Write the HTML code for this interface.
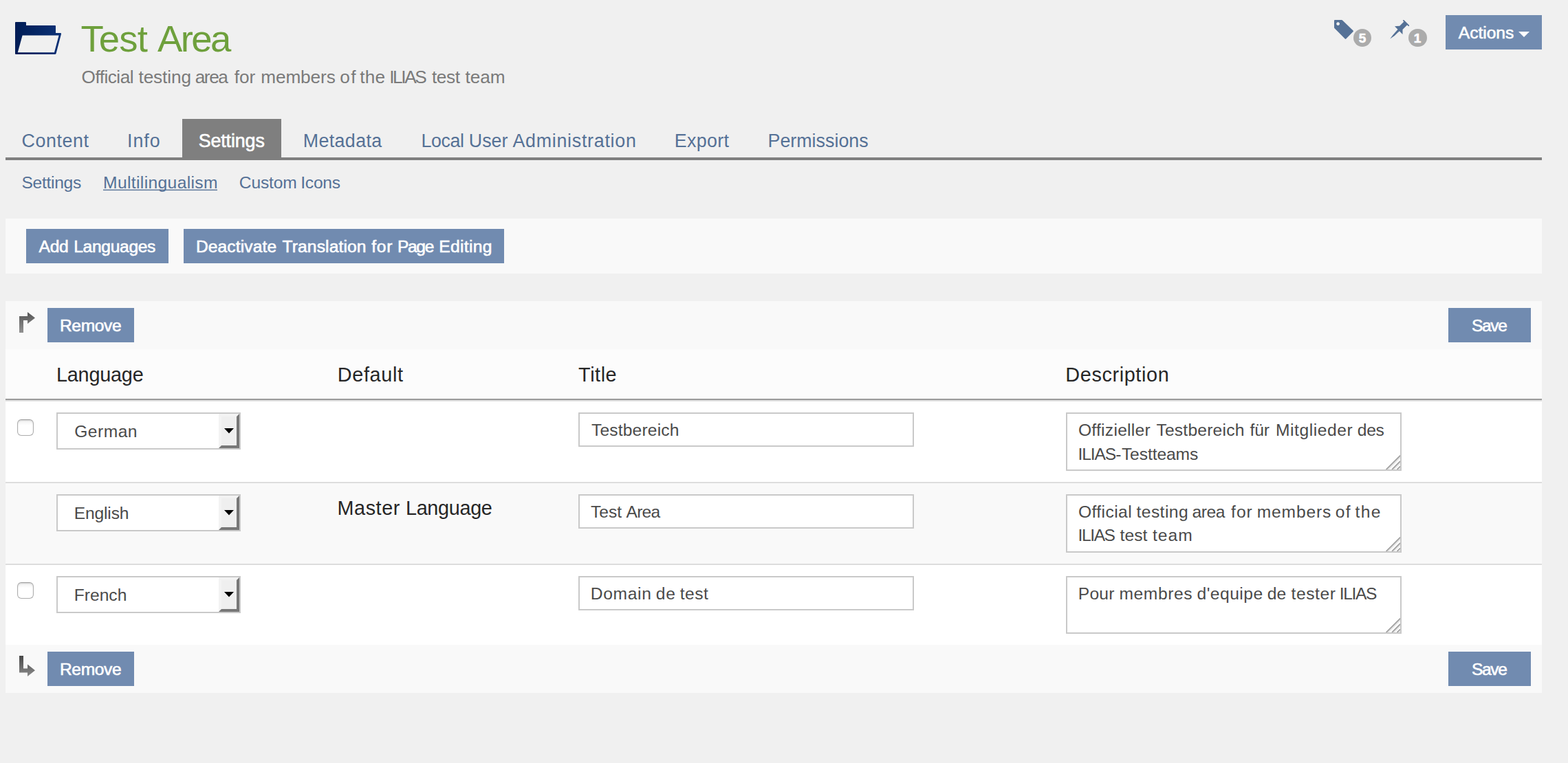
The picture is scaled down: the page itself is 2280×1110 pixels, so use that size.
<!DOCTYPE html>
<html lang="en">
<head>
<meta charset="utf-8">
<title>Test Area - Multilingualism</title>
<style>
html,body{margin:0;padding:0;}
body{width:2280px;height:1110px;background:#f0f0f0;position:relative;overflow:hidden;font-family:"Liberation Sans",sans-serif;}
h1,p{margin:0;padding:0;font-weight:normal;}
.b{position:absolute;display:block;}
.t{position:absolute;white-space:pre;line-height:1;font-family:"Liberation Sans",sans-serif;}
.w{-webkit-text-stroke:0.6px #fff;}
.w2{-webkit-text-stroke:0.6px #fff;}
</style>
</head>
<body>
<header class="g-header">
<svg class="b" style="left:20px;top:28px" width="74" height="56" viewBox="20 28 74 56">
<defs><linearGradient id="fg" x1="0" y1="0" x2="1" y2="0"><stop offset="0" stop-color="#001c55"/><stop offset="1" stop-color="#0c3277"/></linearGradient></defs>
<path d="M22 33 Q22 32 23 32 H37 Q38 32 38 33 V37 H80 Q81 37 81 38 V48 H88 Q89.5 48 89 49.5 L81.5 78 Q81.2 79 80 79 H23 Q22 79 22 78 Z" fill="url(#fg)"/>
<path d="M32.6 51.6 H85.6 L79 76.2 H25.8 Z" fill="#f0f0f0"/>
</svg>
<svg class="b" style="left:1936px;top:25px" width="36" height="36" viewBox="1936 25 36 36">
<path d="M1940 30 Q1940 29 1941 29 H1951 Q1951.6 29 1952 29.4 L1967.6 44.6 Q1968.3 45.3 1967.6 46 L1957.2 56.4 Q1956.5 57.1 1955.8 56.4 L1940.4 41 Q1940 40.6 1940 40 Z M1945.6 32.2 a2.4 2.4 0 1 0 0.01 0 Z" fill="#557196" fill-rule="evenodd"/>
</svg>
<div class="b" style="left:1968px;top:42px;width:26px;height:26px;background:#ababab;border-radius:13px;"></div>
<svg class="b" style="left:2018px;top:25px" width="36" height="36" viewBox="2018 25 36 36">
<path d="M2028 38.2 L2035.2 37.7 L2041.9 30.9 L2046.7 35.8 L2039.5 42.9 L2039.5 49.9 L2034.9 45.2 L2027.8 52.1 L2021.2 56.6 L2025.3 51 L2032.5 42.8 Z" fill="#557196"/><path d="M2040.9 29.9 L2048.2 37.2" stroke="#557196" stroke-width="1.9" stroke-linecap="round" fill="none"/>
</svg>
<div class="b" style="left:2048px;top:42px;width:27px;height:26px;background:#ababab;border-radius:13px;"></div>
<div class="b" style="left:2102px;top:22px;width:140px;height:50px;background:#718bb0;"></div>
<svg class="b" style="left:2208px;top:46px" width="16" height="8" viewBox="0 0 16 8"><path d="M0 0H16L8 8Z" fill="#fff"/></svg>
<h1 class="t" style="left:117.38px;top:30px;font-size:54.5px;color:#6ea03c;"><span style="letter-spacing:-0.809px;">Test </span><span style="letter-spacing:-2.612px;margin-left:0.610px;">Area</span></h1>
<p class="t" style="left:118.58px;top:99px;font-size:26.2px;color:#7a7a7a;"><span style="letter-spacing:-0.517px;">Official </span><span style="letter-spacing:-0.107px;margin-left:0.717px;">testing </span><span style="letter-spacing:-1.388px;margin-left:-1.410px;">area </span><span style="letter-spacing:-0.066px;margin-left:4.439px;">for </span><span style="letter-spacing:-0.106px;margin-left:0.843px;">members </span><span style="letter-spacing:1.417px;margin-left:-0.594px;">of </span><span style="letter-spacing:0.131px;margin-left:-4.270px;">the </span><span style="letter-spacing:-2.371px;margin-left:-1.344px;">ILIAS </span><span style="letter-spacing:-0.435px;margin-left:4.726px;">test </span><span style="letter-spacing:-0.093px;margin-left:1.281px;">team</span></p>
<div class="t w2" style="left:1975.84px;top:46px;font-size:19px;color:#fff;font-weight:bold;"><span style="letter-spacing:-0.764px;">5</span></div>
<div class="t w2" style="left:2055.63px;top:46px;font-size:19px;color:#fff;font-weight:bold;"><span style="letter-spacing:-0.764px;">1</span></div>
<div class="t w" style="left:2120.76px;top:36px;font-size:24.6px;color:#fff;"><span style="letter-spacing:-0.015px;">Actions</span></div>
</header>
<nav class="g-tabs">
<div class="b" style="left:8px;top:229px;width:2234px;height:4px;background:#7f7f7f;"></div>
<div class="b" style="left:265px;top:173px;width:144px;height:60px;background:#7f7f7f;"></div>
<div class="t" style="left:31.48px;top:192px;font-size:26.8px;color:#557196;"><span style="letter-spacing:0.620px;">Content</span></div>
<div class="t" style="left:184.97px;top:192px;font-size:26.8px;color:#557196;"><span style="letter-spacing:0.969px;">Info</span></div>
<div class="t w" style="left:288.68px;top:192px;font-size:26.8px;color:#fff;"><span style="letter-spacing:-0.097px;">Settings</span></div>
<div class="t" style="left:440.85px;top:192px;font-size:26.8px;color:#557196;"><span style="letter-spacing:0.361px;">Metadata</span></div>
<div class="t" style="left:612.43px;top:192px;font-size:26.8px;color:#557196;"><span style="letter-spacing:-0.352px;">Local </span><span style="letter-spacing:0.008px;margin-left:-0.025px;">User </span><span style="letter-spacing:0.736px;margin-left:-0.394px;">Administration</span></div>
<div class="t" style="left:980.68px;top:192px;font-size:26.8px;color:#557196;"><span style="letter-spacing:0.350px;">Export</span></div>
<div class="t" style="left:1116.51px;top:192px;font-size:26.8px;color:#557196;"><span style="letter-spacing:0.019px;">Permissions</span></div>
</nav>
<nav class="g-subtabs">
<div class="b" style="left:150px;top:275px;width:166px;height:1px;background:#557196;opacity:.3;"></div>
<div class="b" style="left:150px;top:276px;width:166px;height:1px;background:#557196;"></div>
<div class="b" style="left:150px;top:277px;width:166px;height:1px;background:#557196;opacity:.1;"></div>
<div class="t" style="left:31.44px;top:254px;font-size:24.6px;color:#557196;"><span style="letter-spacing:-0.285px;">Settings</span></div>
<div class="t" style="left:150.11px;top:254px;font-size:24.6px;color:#557196;"><span style="letter-spacing:0.363px;">Multilingualism</span></div>
<div class="t" style="left:347.82px;top:254px;font-size:24.6px;color:#557196;"><span style="letter-spacing:-0.178px;">Custom </span><span style="letter-spacing:-0.261px;margin-left:-0.845px;">Icons</span></div>
</nav>
<section class="g-toolbar">
<div class="b" style="left:8px;top:318px;width:2234px;height:80px;background:#f9f9f9;"></div>
<div class="b" style="left:38px;top:333px;width:207px;height:50px;background:#718bb0;"></div>
<div class="b" style="left:267px;top:333px;width:466px;height:50px;background:#718bb0;"></div>
<div class="t w" style="left:56.57px;top:347px;font-size:24.6px;color:#fff;"><span style="letter-spacing:-0.272px;">Add </span><span style="letter-spacing:-0.325px;margin-left:1.199px;">Languages</span></div>
<div class="t w" style="left:284.95px;top:347px;font-size:24.6px;color:#fff;"><span style="letter-spacing:0.106px;">Deactivate </span><span style="letter-spacing:0.116px;margin-left:1.395px;">Translation </span><span style="letter-spacing:0.671px;margin-left:0.786px;">for </span><span style="letter-spacing:-1.347px;margin-left:-0.575px;">Page </span><span style="letter-spacing:0.309px;margin-left:2.780px;">Editing</span></div>
</section>
<section class="g-ttop">
<div class="b" style="left:8px;top:438px;width:2234px;height:70px;background:#f9f9f9;"></div>
<svg class="b" style="left:24px;top:450px" width="32" height="40" viewBox="24 450 32 40">
<defs><linearGradient id="g1" x1="0" y1="0" x2="0" y2="1"><stop offset="0" stop-color="#555"/><stop offset="1" stop-color="#929292"/></linearGradient></defs>
<path d="M28 484 V460 H40 V454 L51 462.5 L40 471 V466 H34 V484 Z" fill="url(#g1)"/></svg>
<div class="b" style="left:69px;top:448px;width:126px;height:50px;background:#718bb0;"></div>
<div class="b" style="left:2106px;top:448px;width:120px;height:50px;background:#718bb0;"></div>
<div class="t w" style="left:86.95px;top:462px;font-size:24.6px;color:#fff;"><span style="letter-spacing:-0.371px;">Remove</span></div>
<div class="t w" style="left:2140.04px;top:462px;font-size:24.6px;color:#fff;"><span style="letter-spacing:-1.382px;">Save</span></div>
</section>
<section class="g-thead">
<div class="b" style="left:8px;top:508px;width:2234px;height:72px;background:#fcfcfc;"></div>
<div class="b" style="left:8px;top:580px;width:2234px;height:2px;background:#9a9a9a;"></div>
<div class="t" style="left:81.96px;top:531px;font-size:28.8px;color:#262626;"><span style="letter-spacing:-0.201px;">Language</span></div>
<div class="t" style="left:490.83px;top:531px;font-size:28.8px;color:#262626;"><span style="letter-spacing:0.660px;">Default</span></div>
<div class="t" style="left:841.06px;top:531px;font-size:28.8px;color:#262626;"><span style="letter-spacing:0.563px;">Title</span></div>
<div class="t" style="left:1549.32px;top:531px;font-size:28.8px;color:#262626;"><span style="letter-spacing:0.631px;">Description</span></div>
</section>
<section class="g-row1">
<div class="b" style="left:8px;top:582px;width:2234px;height:2px;background:#e0e0e0;"></div>
<div class="b" style="left:8px;top:584px;width:2234px;height:117px;background:#ffffff;"></div>
<div class="b" style="left:25px;top:610px;width:24px;height:24px;background:linear-gradient(#f0f0f0,#fff 35%);box-sizing:border-box;border:1.5px solid #adadad;border-top-color:#9e9e9e;border-radius:6px;box-shadow:inset 0 1px 2px rgba(0,0,0,.14);"></div>
<div class="b" style="left:82px;top:600px;width:268px;height:54px;background:#fff;box-sizing:border-box;border:2px solid #c9c9c9;"></div>
<div class="b" style="left:318px;top:602px;width:30px;height:50px;background:#efefef;box-sizing:border-box;border-style:solid;border-width:4px;border-color:#f3f3f3 #777 #777 #f3f3f3;"></div>
<svg class="b" style="left:326px;top:623px" width="14" height="8" viewBox="0 0 14 8"><path d="M0 0H14L7 7.6Z" fill="#000"/></svg>
<div class="b" style="left:841px;top:600px;width:488px;height:50px;background:#fff;box-sizing:border-box;border:2px solid #c9c9c9;"></div>
<div class="b" style="left:1550px;top:600px;width:488px;height:85px;background:#fff;box-sizing:border-box;border:2px solid #c9c9c9;"></div>
<svg class="b" style="left:2012px;top:659px" width="24" height="24" viewBox="0 0 24 24">
<g fill="none"><path d="M3.6 24.2 L24.2 3.6 M12 24.2 L24.2 12 M19.4 24.2 L24.2 19.4" stroke="#a2a2a2" stroke-width="1.9"/><path d="M6.2 24.4 L24.4 6.2 M14.6 24.4 L24.4 14.6 M22 24.4 L24.4 22" stroke="#e6e6e6" stroke-width="1.5"/></g></svg>
<div class="t" style="left:108.26px;top:616px;font-size:24.6px;color:#4a4a4a;"><span style="letter-spacing:0.483px;">German</span></div>
<div class="t" style="left:860.02px;top:614px;font-size:24.6px;color:#4a4a4a;"><span style="letter-spacing:0.164px;">Testbereich</span></div>
<div class="t" style="left:1567.96px;top:614px;font-size:24.6px;color:#4a4a4a;"><span style="letter-spacing:0.271px;">Offizieller </span><span style="letter-spacing:0.224px;margin-left:1.324px;">Testbereich </span><span style="letter-spacing:-0.176px;margin-left:0.891px;">für </span><span style="letter-spacing:0.554px;margin-left:2.604px;">Mitglieder </span><span style="letter-spacing:-0.390px;margin-left:-0.736px;">des</span></div>
<div class="t" style="left:1567.53px;top:649px;font-size:24.6px;color:#4a4a4a;"><span style="letter-spacing:-1.098px;">ILIAS-</span><span style="letter-spacing:-0.084px;margin-left:1.622px;">Testteams</span></div>
</section>
<section class="g-row2">
<div class="b" style="left:8px;top:701px;width:2234px;height:2px;background:#dddddd;"></div>
<div class="b" style="left:8px;top:703px;width:2234px;height:117px;background:#f9f9f9;"></div>
<div class="b" style="left:82px;top:719px;width:268px;height:54px;background:#fff;box-sizing:border-box;border:2px solid #c9c9c9;"></div>
<div class="b" style="left:318px;top:721px;width:30px;height:50px;background:#efefef;box-sizing:border-box;border-style:solid;border-width:4px;border-color:#f3f3f3 #777 #777 #f3f3f3;"></div>
<svg class="b" style="left:326px;top:742px" width="14" height="8" viewBox="0 0 14 8"><path d="M0 0H14L7 7.6Z" fill="#000"/></svg>
<div class="b" style="left:841px;top:719px;width:488px;height:50px;background:#fff;box-sizing:border-box;border:2px solid #c9c9c9;"></div>
<div class="b" style="left:1550px;top:719px;width:488px;height:85px;background:#fff;box-sizing:border-box;border:2px solid #c9c9c9;"></div>
<svg class="b" style="left:2012px;top:778px" width="24" height="24" viewBox="0 0 24 24">
<g fill="none"><path d="M3.6 24.2 L24.2 3.6 M12 24.2 L24.2 12 M19.4 24.2 L24.2 19.4" stroke="#a2a2a2" stroke-width="1.9"/><path d="M6.2 24.4 L24.4 6.2 M14.6 24.4 L24.4 14.6 M22 24.4 L24.4 22" stroke="#e6e6e6" stroke-width="1.5"/></g></svg>
<div class="t" style="left:107.82px;top:735px;font-size:24.6px;color:#4a4a4a;"><span style="letter-spacing:-0.168px;">English</span></div>
<div class="t" style="left:490.58px;top:725px;font-size:28.8px;color:#262626;"><span style="letter-spacing:0.547px;">Master </span><span style="letter-spacing:-0.319px;margin-left:-0.464px;">Language</span></div>
<div class="t" style="left:859.02px;top:733px;font-size:24.6px;color:#4a4a4a;"><span style="letter-spacing:-0.010px;">Test </span><span style="letter-spacing:-0.745px;margin-left:-0.441px;">Area</span></div>
<div class="t" style="left:1567.96px;top:733px;font-size:24.6px;color:#4a4a4a;"><span style="letter-spacing:0.429px;">Official </span><span style="letter-spacing:0.444px;margin-left:-0.892px;">testing </span><span style="letter-spacing:-0.508px;margin-left:-1.738px;">area </span><span style="letter-spacing:0.997px;margin-left:2.916px;">for </span><span style="letter-spacing:0.854px;margin-left:-1.893px;">members </span><span style="letter-spacing:1.221px;margin-left:-2.077px;">of </span><span style="letter-spacing:1.326px;margin-left:-2.333px;">the</span></div>
<div class="t" style="left:1567.62px;top:767px;font-size:24.6px;color:#4a4a4a;"><span style="letter-spacing:-1.436px;">ILIAS </span><span style="letter-spacing:0.052px;margin-left:2.563px;">test </span><span style="letter-spacing:0.983px;margin-left:0.774px;">team</span></div>
</section>
<section class="g-row3">
<div class="b" style="left:8px;top:820px;width:2234px;height:2px;background:#dddddd;"></div>
<div class="b" style="left:8px;top:822px;width:2234px;height:116px;background:#ffffff;"></div>
<div class="b" style="left:25px;top:847px;width:24px;height:24px;background:linear-gradient(#f0f0f0,#fff 35%);box-sizing:border-box;border:1.5px solid #adadad;border-top-color:#9e9e9e;border-radius:6px;box-shadow:inset 0 1px 2px rgba(0,0,0,.14);"></div>
<div class="b" style="left:82px;top:838px;width:268px;height:54px;background:#fff;box-sizing:border-box;border:2px solid #c9c9c9;"></div>
<div class="b" style="left:318px;top:840px;width:30px;height:50px;background:#efefef;box-sizing:border-box;border-style:solid;border-width:4px;border-color:#f3f3f3 #777 #777 #f3f3f3;"></div>
<svg class="b" style="left:326px;top:861px" width="14" height="8" viewBox="0 0 14 8"><path d="M0 0H14L7 7.6Z" fill="#000"/></svg>
<div class="b" style="left:841px;top:838px;width:488px;height:50px;background:#fff;box-sizing:border-box;border:2px solid #c9c9c9;"></div>
<div class="b" style="left:1550px;top:838px;width:488px;height:84px;background:#fff;box-sizing:border-box;border:2px solid #c9c9c9;"></div>
<svg class="b" style="left:2012px;top:896px" width="24" height="24" viewBox="0 0 24 24">
<g fill="none"><path d="M3.6 24.2 L24.2 3.6 M12 24.2 L24.2 12 M19.4 24.2 L24.2 19.4" stroke="#a2a2a2" stroke-width="1.9"/><path d="M6.2 24.4 L24.4 6.2 M14.6 24.4 L24.4 14.6 M22 24.4 L24.4 22" stroke="#e6e6e6" stroke-width="1.5"/></g></svg>
<div class="t" style="left:107.81px;top:854px;font-size:24.6px;color:#4a4a4a;"><span style="letter-spacing:-0.001px;">French</span></div>
<div class="t" style="left:858.71px;top:852px;font-size:24.6px;color:#4a4a4a;"><span style="letter-spacing:0.692px;">Domain </span><span style="letter-spacing:0.913px;margin-left:-1.467px;">de </span><span style="letter-spacing:0.418px;margin-left:-1.790px;">test</span></div>
<div class="t" style="left:1567.71px;top:852px;font-size:24.6px;color:#4a4a4a;"><span style="letter-spacing:0.288px;">Pour </span><span style="letter-spacing:0.572px;margin-left:-0.405px;">membres </span><span style="letter-spacing:0.470px;margin-left:-0.919px;">d'equipe </span><span style="letter-spacing:0.128px;margin-left:-1.111px;">de </span><span style="letter-spacing:0.593px;margin-left:0.162px;">tester </span><span style="letter-spacing:-1.385px;margin-left:-2.119px;">ILIAS</span></div>
</section>
<section class="g-tbot">
<div class="b" style="left:8px;top:938px;width:2234px;height:70px;background:#f9f9f9;"></div>
<svg class="b" style="left:24px;top:950px" width="32" height="40" viewBox="24 950 32 40">
<defs><linearGradient id="g2" x1="0" y1="0" x2="0" y2="1"><stop offset="0" stop-color="#484848"/><stop offset="1" stop-color="#8a8a8a"/></linearGradient></defs>
<path d="M28 954 H34 V972.5 H40 V966.5 L51 975.3 L40 984 V978.5 H28 Z" fill="url(#g2)"/></svg>
<div class="b" style="left:69px;top:948px;width:126px;height:50px;background:#718bb0;"></div>
<div class="b" style="left:2106px;top:948px;width:120px;height:50px;background:#718bb0;"></div>
<div class="t w" style="left:86.95px;top:962px;font-size:24.6px;color:#fff;"><span style="letter-spacing:-0.371px;">Remove</span></div>
<div class="t w" style="left:2140.04px;top:962px;font-size:24.6px;color:#fff;"><span style="letter-spacing:-1.382px;">Save</span></div>
</section>
</body>
</html>
